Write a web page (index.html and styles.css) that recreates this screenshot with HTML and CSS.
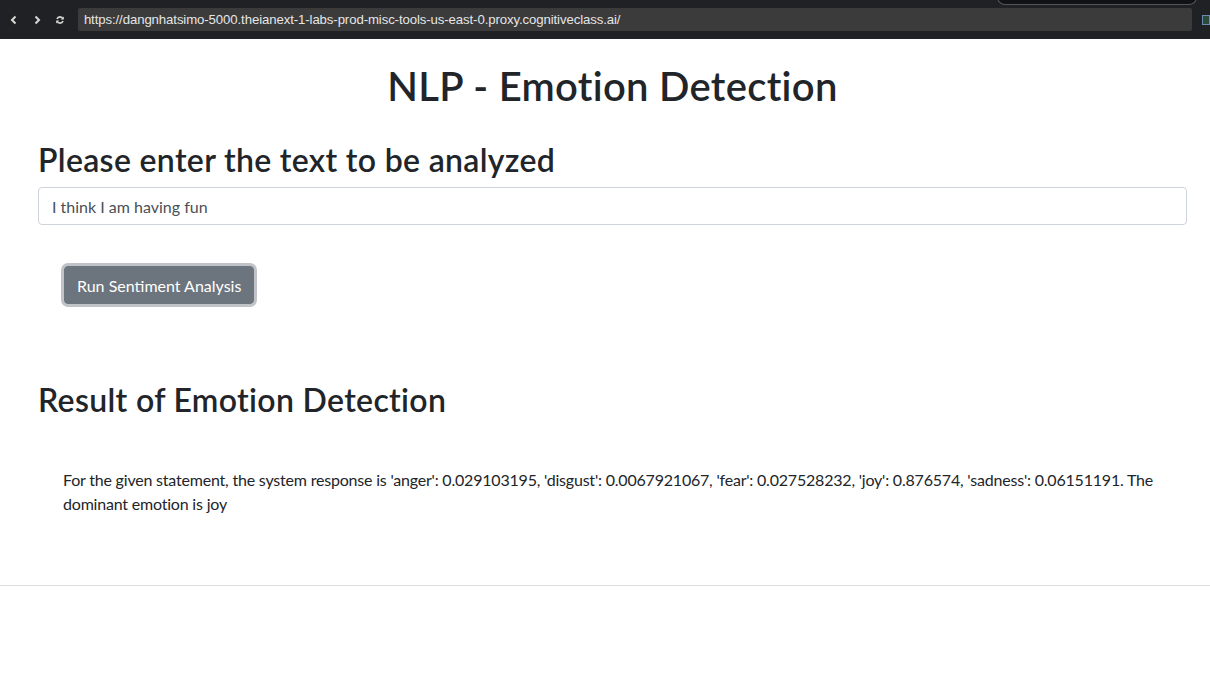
FILE: index.html
```html
<!DOCTYPE html>
<html>
<head>
<meta charset="utf-8">
<link rel="stylesheet" href="styles.css">
</head>
<body>
<div class="chrome">
  <div class="nav">
    <svg class="nav-icon" width="10" height="10" viewBox="0 0 10 10"><path d="M6.5 1.5 L3 5 L6.5 8.5" fill="none" stroke="#d8d8d8" stroke-width="2"/></svg>
    <svg class="nav-icon" width="10" height="10" viewBox="0 0 10 10"><path d="M3.5 1.5 L7 5 L3.5 8.5" fill="none" stroke="#d8d8d8" stroke-width="2"/></svg>
    <svg class="nav-icon" width="10" height="10" viewBox="0 0 10 10"><path d="M8 4 A3.2 3.2 0 0 0 2 4 M2 6 A3.2 3.2 0 0 0 8 6" fill="none" stroke="#d8d8d8" stroke-width="1.6"/><path d="M8.8 1.6 L8.8 4.6 L5.8 4.6 Z M1.2 8.4 L1.2 5.4 L4.2 5.4 Z" fill="#d8d8d8"/></svg>
  </div>
  <div class="url">https://dangnhatsimo-5000.theianext-1-labs-prod-misc-tools-us-east-0.proxy.cognitiveclass.ai/</div>
  <div class="ext"></div>
  <div class="popup-edge"></div>
</div>
<main class="page">
  <h1 class="title">NLP - Emotion Detection</h1>
  <h2 class="section-title">Please enter the text to be analyzed</h2>
  <input class="text-input" type="text" value="I think I am having fun">
  <div class="actions">
    <button class="btn">Run Sentiment Analysis</button>
  </div>
  <h2 class="section-title result-title">Result of Emotion Detection</h2>
  <p class="result">For the given statement, the system response is 'anger': 0.029103195, 'disgust': 0.0067921067, 'fear': 0.027528232, 'joy': 0.876574, 'sadness': 0.06151191. The dominant emotion is joy</p>
</main>
<hr class="divider">
</body>
</html>
```
FILE: styles.css
```css
html, body {
  margin: 0;
  padding: 0;
  background: #fff;
}
body {
  font-family: Lato, "Open Sans", sans-serif;
  color: #212529;
  overflow: hidden;
}
.chrome {
  position: relative;
  height: 39px;
  background: #202124;
  display: flex;
  align-items: center;
  padding-left: 9px;
}
.nav {
  display: flex;
  align-items: center;
  gap: 13px;
  width: 69px;
}
.url {
  width: 1116px;
  height: 23px;
  background: #3b3b3b;
  border-radius: 2px;
  color: #e6e6e6;
  font-family: "Liberation Sans", Arial, sans-serif;
  font-size: 13.2px;
  line-height: 23px;
  padding-left: 6px;
  box-sizing: border-box;
  letter-spacing: -0.1px;
}
.ext {
  width: 6px;
  height: 8px;
  margin-left: 10px;
  border: 1px solid #6a8ab0;
  background: #2a4a3a;
}
.popup-edge {
  position: absolute;
  left: 997px;
  top: -10px;
  width: 198px;
  height: 14px;
  border: 1px solid #555;
  border-top: none;
  border-radius: 0 0 8px 8px;
  background: #111214;
}
.page {
  padding: 0 23px 0 38px;
}
.title {
  font-size: 40px;
  font-weight: 600;
  line-height: 48px;
  letter-spacing: 0.3px;
  text-align: center;
  margin: 23px 0 31px;
}
.section-title {
  font-size: 32px;
  font-weight: 600;
  line-height: 38px;
  letter-spacing: 0.33px;
  margin: 0 0 8px;
}
.text-input {
  display: block;
  width: 100%;
  height: 38px;
  box-sizing: border-box;
  border: 1px solid #ced4da;
  border-radius: 4px;
  padding: 6px 13px;
  font-family: inherit;
  font-size: 16px;
  color: #495057;
  outline: none;
}
.actions {
  padding: 41px 0 0 26px;
}
.btn {
  height: 38px;
  padding: 0 12px;
  border: 1px solid #6c757d;
  border-radius: 4px;
  background: #6c757d;
  color: #fff;
  font-family: inherit;
  font-size: 16px;
  box-shadow: 0 0 0 3px rgba(130,138,145,.5);
}
.result-title {
  margin-top: 77px;
}
.result {
  margin: 49px 0 0 25px;
  font-size: 16px;
  line-height: 24px;
  letter-spacing: -0.2px;
}
.divider {
  margin: 69px 0 0;
  border: 0;
  border-top: 1px solid #dcdcdc;
}
```
